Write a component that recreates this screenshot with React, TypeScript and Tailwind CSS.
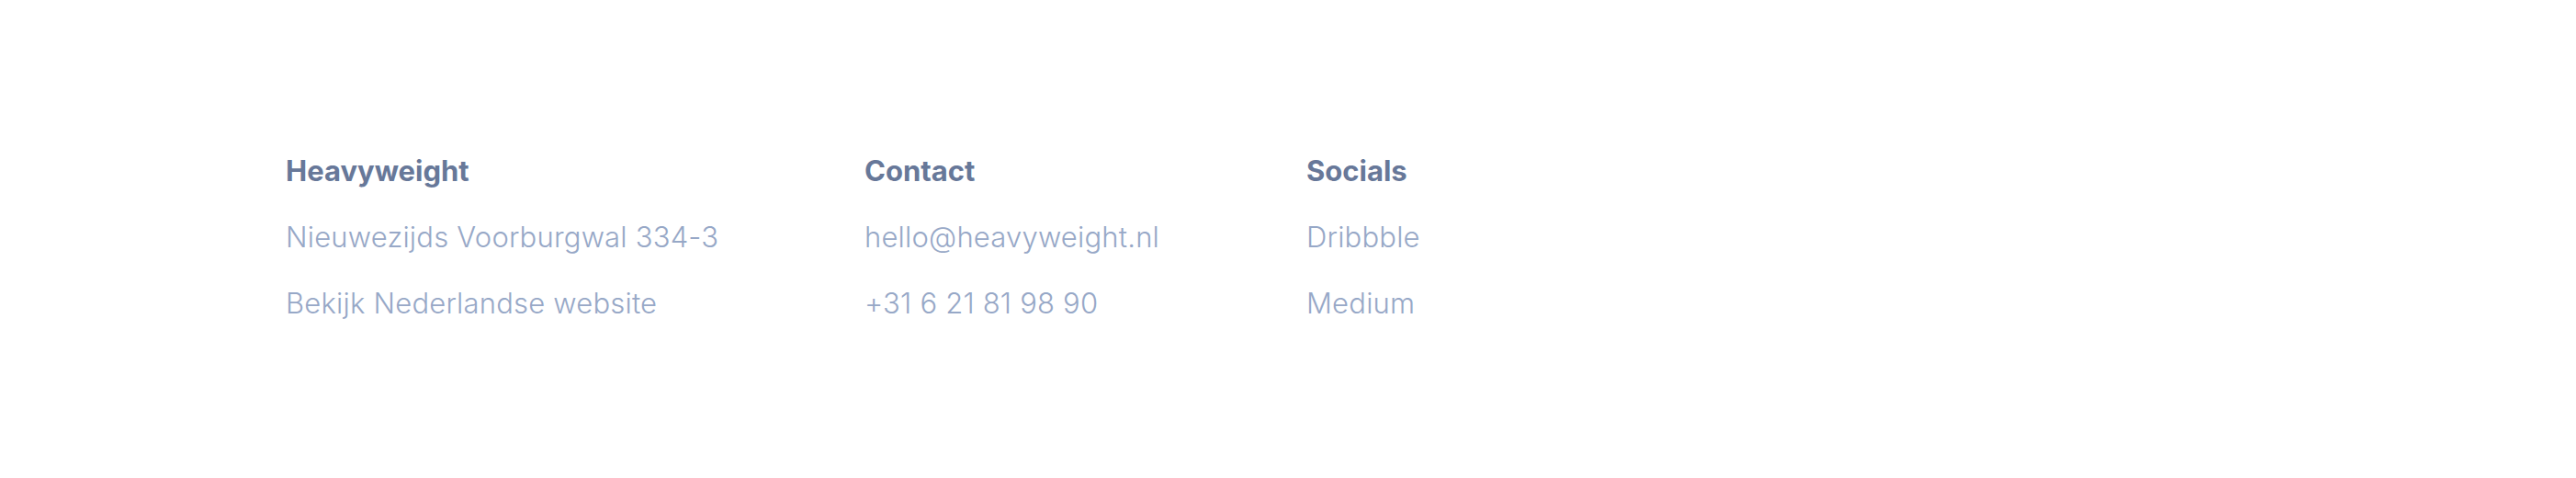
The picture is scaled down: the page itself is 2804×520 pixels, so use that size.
export default function App() {
  const columns = [
    {
      title: "Heavyweight",
      width: "w-[630px]",
      items: ["Nieuwezijds Voorburgwal 334-3", "Bekijk Nederlandse website"],
    },
    {
      title: "Contact",
      width: "w-[481px]",
      items: ["hello@heavyweight.nl", "+31 6 21 81 98 90"],
    },
    {
      title: "Socials",
      width: "w-[300px]",
      items: ["Dribbble", "Medium"],
    },
  ];

  return (
    <footer className="w-[2804px] h-[520px] bg-white font-['Inter',sans-serif]">
      <div className="flex pl-[311px] pt-[150px]">
        {columns.map((col) => (
          <div key={col.title} className={`${col.width} flex flex-col`}>
            <h3 className="text-[31px] leading-[72px] font-bold text-[#677899]">
              {col.title}
            </h3>
            {col.items.map((item) => (
              <a
                key={item}
                href="#"
                className="text-[31px] leading-[72px] font-light tracking-[0.2px] text-[#97a8c7]"
              >
                {item}
              </a>
            ))}
          </div>
        ))}
      </div>
    </footer>
  );
}
